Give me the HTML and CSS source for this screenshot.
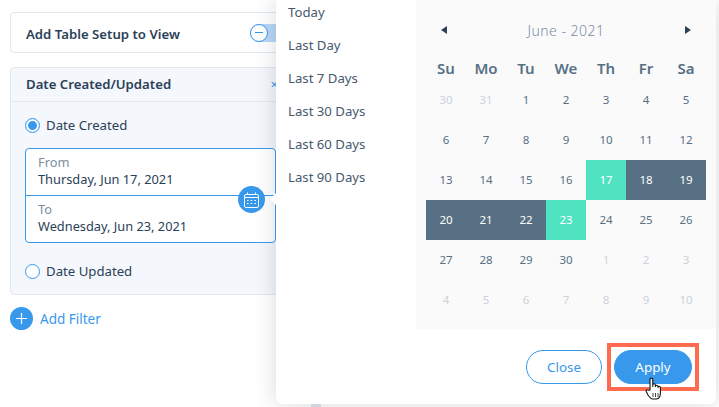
FILE: index.html
```html
<!DOCTYPE html>
<html lang="en">
<head>
    <meta charset="UTF-8">
    <meta name="viewport" content="width=device-width, initial-scale=1.0">
    <title>Date Filter</title>
    <link rel="stylesheet" href="styles.css">
</head>
<body>
    <div class="sidebar">
        <div class="setup-card">
            <span class="setup-title">Add Table Setup to View</span>
            <span class="toggle"><span class="toggle-knob"><span class="toggle-minus"></span></span></span>
        </div>

        <div class="filter-card">
            <div class="filter-head">
                <span>Date Created/Updated</span>
                <span class="filter-close">×</span>
            </div>
            <div class="filter-body">
                <div class="radio-row">
                    <span class="radio radio-on"></span>
                    <span>Date Created</span>
                </div>
                <div class="range-box">
                    <div class="range-field range-from">
                        <span class="range-label">From</span>
                        <span class="range-value">Thursday, Jun 17, 2021</span>
                    </div>
                    <div class="range-field">
                        <span class="range-label">To</span>
                        <span class="range-value">Wednesday, Jun 23, 2021</span>
                    </div>
                    <span class="range-icon">
                        <svg width="15" height="16" viewBox="0 0 15 16" fill="none" stroke="#fff">
                            <rect x="0.5" y="2.5" width="14" height="13" rx="1.5"/>
                            <path d="M0.5 5.5h14M3.5 0.5v2M11.5 0.5v2"/>
                            <path d="M3 8.5h1.5M6.7 8.5h1.5M10.5 8.5h1.5M3 11.5h1.5M6.7 11.5h1.5M10.5 11.5h1.5" stroke-width="1"/>
                        </svg>
                    </span>
                </div>
                <div class="radio-row radio-row-last">
                    <span class="radio"></span>
                    <span>Date Updated</span>
                </div>
            </div>
        </div>

        <div class="add-filter">
            <span class="add-circle">
                <svg width="13" height="13" viewBox="0 0 13 13" stroke="#fff" stroke-width="1.2"><path d="M6.5 1v11M1 6.5h11"/></svg>
            </span>
            <span>Add Filter</span>
        </div>
    </div>

    <div class="scroll-stub"></div>

    <div class="popover">
        <span class="notch"></span>
        <ul class="presets">
            <li>Today</li>
            <li>Last Day</li>
            <li>Last 7 Days</li>
            <li>Last 30 Days</li>
            <li>Last 60 Days</li>
            <li>Last 90 Days</li>
        </ul>
        <div class="popover-main">
            <div class="calendar">
                <div class="cal-nav">
                    <span class="arrow arrow-left"></span>
                    <span class="cal-title">June - 2021</span>
                    <span class="arrow arrow-right"></span>
                </div>
                <div class="cal-grid cal-week">
                    <span>Su</span><span>Mo</span><span>Tu</span><span>We</span><span>Th</span><span>Fr</span><span>Sa</span>
                </div>
                <div class="cal-grid" id="days"></div>
            </div>
            <div class="popover-foot">
                <button class="btn btn-close">Close</button>
                <span class="apply-mark"><button class="btn btn-apply">Apply</button></span>
            </div>
        </div>
    </div>

    <svg class="hand" width="18" height="23" viewBox="0 0 18 23">
        <path d="M5 13V2.500a1.400 1.400 0 0 1 2.800 0V9.500V8a1.300 1.300 0 0 1 2.600 0v1.500a1.300 1.300 0 0 1 2.600 0v1a1.200 1.200 0 0 1 2.400 0V16c0 3-1.500 5.500-3.500 6H7.500C5.500 22 4.500 20 3 18L1.200 14.500c-.6-1.200 1-2.300 2-1.300z" fill="#fff" stroke="#111" stroke-width="1.100" stroke-linejoin="round"/>
        <path d="M8 16v4M10.500 16v4M13 16v4" stroke="#111" stroke-width=".8"/>
    </svg>

    <script src="calendar.js"></script>
</body>
</html>
```

FILE: styles.css
```css
* {
    box-sizing: border-box;
}

body {
    margin: 0;
    width: 719px;
    height: 407px;
    position: relative;
    overflow: hidden;
    background-color: #fff;
    font-family: 'Noto Sans', sans-serif;
    font-size: 13.2px;
    color: #2b4158;
}

.sidebar {
    width: 300px;
    padding: 12px 0 0 10px;
}

.setup-card {
    display: flex;
    align-items: center;
    justify-content: space-between;
    height: 41px;
    padding: 0 0 0 15px;
    border: 1px solid #e2e8ee;
    border-radius: 4px;
    background-color: #fff;
}

.setup-title {
    padding-top: 2px;
}

.setup-title,
.filter-head {
    font-weight: 600;
    color: #2b4158;
}

.toggle {
    width: 50px;
    height: 18px;
    border-radius: 9px;
    background-color: #b7d7f5;
    position: relative;
    left: 1px;
}

.toggle-knob {
    display: flex;
    align-items: center;
    justify-content: center;
    width: 18px;
    height: 18px;
    border: 1px solid #3899ec;
    border-radius: 50%;
    background-color: #fff;
}

.toggle-minus {
    width: 8px;
    height: 1px;
    background-color: #3899ec;
}

.filter-card {
    margin-top: 14px;
    height: 228px;
    border: 1px solid #e2e8ee;
    border-radius: 4px;
    background-color: #f4f7fb;
}

.filter-head {
    display: flex;
    justify-content: space-between;
    align-items: center;
    height: 34px;
    padding: 0 21px 2px 15px;
    border-bottom: 1px solid #e2e8ee;
}

.filter-close {
    color: #3899ec;
    font-weight: 400;
}

.filter-body {
    padding: 13px 14px 0 14px;
}

.radio-row {
    display: flex;
    align-items: center;
    gap: 6px;
    height: 20px;
}

.radio-row-last {
    margin-top: 18px;
}

.radio {
    width: 15px;
    height: 15px;
    border: 1px solid #3899ec;
    border-radius: 50%;
    background-color: #fff;
}

.radio-on {
    box-shadow: inset 0 0 0 2px #fff, inset 0 0 0 8px #3899ec;
}

.range-box {
    position: relative;
    width: 251px;
    height: 95px;
    margin-top: 13px;
    border: 1px solid #3899ec;
    border-radius: 4px;
    background-color: #fff;
}

.range-field {
    display: flex;
    flex-direction: column;
    height: 47px;
    padding: 5px 12px 0;
    font-size: 12.800px;
    line-height: 17px;
}

.range-from {
    border-bottom: 1px solid #3899ec;
}

.range-label {
    color: #7a8ea3;
}

.range-value {
    color: #2b4158;
}

.range-icon {
    position: absolute;
    top: 37px;
    left: 212px;
    display: flex;
    align-items: center;
    justify-content: center;
    width: 27px;
    height: 27px;
    border-radius: 50%;
    background-color: #3899ec;
}

.add-filter {
    display: flex;
    align-items: center;
    gap: 7px;
    margin-top: 12px;
    font-size: 13.500px;
    color: #3899ec;
}

.add-circle {
    display: flex;
    align-items: center;
    justify-content: center;
    width: 23px;
    height: 23px;
    border-radius: 50%;
    background-color: #3899ec;
}

.scroll-stub {
    position: absolute;
    left: 311px;
    top: 400px;
    width: 10px;
    height: 7px;
    background-color: #dfe5eb;
}

.popover {
    position: absolute;
    left: 276px;
    top: 0;
    width: 440px;
    height: 404px;
    display: flex;
    background-color: #fff;
    border-radius: 0 0 6px 6px;
    box-shadow: 0 0 22px rgba(43, 65, 88, 0.2);
}

.notch {
    position: absolute;
    left: -6px;
    top: 193px;
    border-top: 6px solid transparent;
    border-bottom: 6px solid transparent;
    border-right: 6px solid #fff;
}

.presets {
    width: 140px;
    margin: 0;
    padding: 2px 0 0 12px;
    list-style: none;
    display: flex;
    flex-direction: column;
    gap: 12px;
    line-height: 21px;
    color: #47596d;
}

.popover-main {
    width: 300px;
}

.calendar {
    height: 329px;
    padding: 0 10px;
    background-color: #fafafb;
}

.cal-nav {
    display: flex;
    align-items: center;
    justify-content: space-between;
    height: 58px;
    padding: 2px 15px 0 15px;
}

.cal-title {
    font-size: 14px;
    font-weight: 300;
    letter-spacing: 0.5px;
    color: #7a8ea3;
}

.arrow {
    border-top: 4px solid transparent;
    border-bottom: 4px solid transparent;
}

.arrow-left {
    border-right: 6px solid #2b4158;
}

.arrow-right {
    border-left: 6px solid #2b4158;
}

.cal-grid {
    display: grid;
    grid-template-columns: repeat(7, 40px);
}

.cal-week {
    height: 22px;
    line-height: 20px;
    text-align: center;
    font-size: 15px;
    font-weight: 600;
    color: #577083;
}

.day {
    display: flex;
    align-items: center;
    justify-content: center;
    height: 40px;
    padding-bottom: 2px;
    font-size: 11.500px;
    color: #577083;
}

.day-muted {
    color: #cbd3da;
}

.day-range {
    background-color: #577083;
    color: #fff;
}

.day-edge {
    background-color: #4fe3c1;
    color: #fff;
}

.popover-foot {
    display: flex;
    justify-content: flex-end;
    align-items: center;
    gap: 5px;
    padding: 14px 17px 0 0;
}

.btn {
    height: 34px;
    border-radius: 17px;
    border: 1px solid #3899ec;
    font-family: inherit;
    font-size: 13.400px;
    color: #3899ec;
    background-color: #fff;
}

.btn-close {
    width: 76px;
}

.btn-apply {
    display: block;
    width: 78px;
    background-color: #3899ec;
    color: #fff;
}

.apply-mark {
    padding: 3px;
    border: 4px solid #ff6b4f;
}

.hand {
    position: absolute;
    left: 645px;
    top: 377px;
}
```

FILE: calendar.js
```js
const dias = document.getElementById('days');
const lista = [30, 31];
for (let d = 1; d <= 30; d++) lista.push(d);
for (let d = 1; d <= 10; d++) lista.push(d);

lista.forEach((d, i) => {
    const cell = document.createElement('span');
    cell.className = 'day';
    cell.innerText = d;
    if (i < 2 || i >= 32) cell.classList.add('day-muted');
    if (i === 18 || i === 24) cell.classList.add('day-edge');
    if (i > 18 && i < 24) cell.classList.add('day-range');
    dias.appendChild(cell);
});
```
